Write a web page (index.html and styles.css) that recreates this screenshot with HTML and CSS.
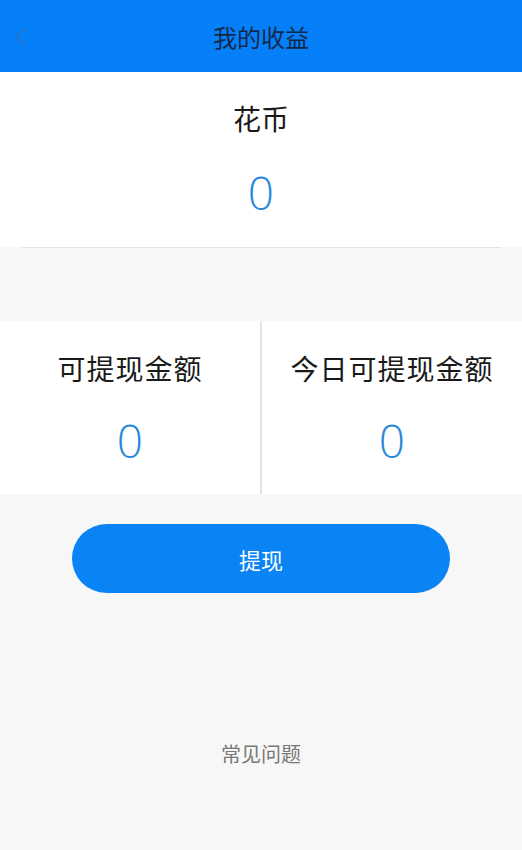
FILE: index.html
```html
<!DOCTYPE html>
<html lang="zh">
<head>
  <meta charset="UTF-8" />
  <meta name="viewport" content="width=device-width, initial-scale=1.0"/>
  <title>我的收益</title>
  <link rel="stylesheet" href="styles.css">
</head>
<body>

<div class="header">
  <span class="back">
    <svg width="12" height="20" viewBox="0 0 12 20"><path d="M10 2 L3 10 L10 18" fill="none" stroke="#2f6fc0" stroke-width="1.5"/></svg>
  </span>
  <h1>我的收益</h1>
</div>

<div class="coin">
  <div class="label">花币</div>
  <div class="value">0</div>
  <div class="line"></div>
</div>

<div class="amounts">
  <div class="cell">
    <div class="label">可提现金额</div>
    <div class="value">0</div>
  </div>
  <div class="cell">
    <div class="label">今日可提现金额</div>
    <div class="value">0</div>
  </div>
</div>

<div class="actions">
  <button>提现</button>
</div>

<div class="faq">常见问题</div>

</body>
</html>
```

FILE: styles.css
```css
* {
  box-sizing: border-box;
}

body {
  margin: 0;
  padding: 0;
  font-family: "Noto Sans CJK SC", "Noto Sans", sans-serif;
  background: #f7f7f7;
  min-height: 850px;
}

.header {
  height: 72px;
  background: #0580f8;
  display: flex;
  align-items: center;
  justify-content: center;
  position: relative;
}

.header h1 {
  margin: 0;
  font-size: 24px;
  font-weight: 400;
  color: #14284a;
}

.back {
  position: absolute;
  left: 14px;
  top: 27px;
  display: flex;
}

.coin {
  background: #fff;
  height: 175px;
  padding-top: 27px;
  text-align: center;
}

.label {
  font-size: 28px;
  line-height: 38px;
  color: #1a1a1a;
}

.value {
  font-family: "Open Sans", "Noto Sans", sans-serif;
  font-weight: 300;
  font-size: 46px;
  line-height: 60px;
  color: #2a88d8;
  margin-top: 25px;
}

.coin .line {
  margin: 25px 22px 0;
  border-top: 1px solid #e2e2e2;
}

.amounts {
  margin-top: 74px;
  background: #fff;
  height: 173px;
  display: flex;
}

.cell {
  flex: 1;
  text-align: center;
  padding-top: 28px;
}

.cell + .cell {
  border-left: 2px solid #e4e4e4;
}

.cell .label {
  font-size: 28px;
  letter-spacing: 1px;
}

.cell .value {
  margin-top: 23px;
}

.actions {
  display: flex;
  justify-content: center;
  margin-top: 30px;
}

.actions button {
  width: 378px;
  height: 69px;
  border: none;
  border-radius: 35px;
  background: #0a84f5;
  color: #fff;
  font-family: inherit;
  font-size: 22px;
}

.faq {
  margin-top: 146px;
  text-align: center;
  font-size: 20px;
  color: #777;
}
```
